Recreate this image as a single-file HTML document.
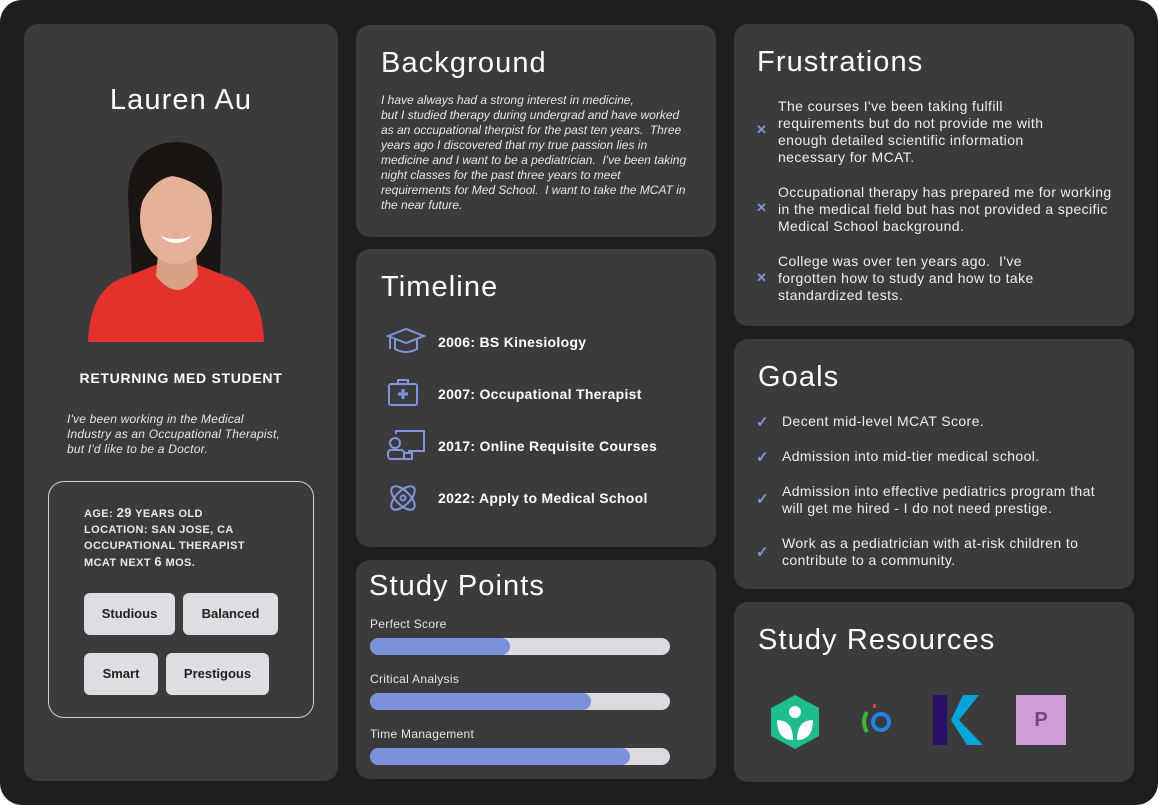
<!DOCTYPE html>
<html><head><style>
*{margin:0;padding:0;box-sizing:border-box}
body{width:1158px;height:805px;background:#fff;font-family:"Liberation Sans",sans-serif;color:#fff;overflow:hidden}
.frame{position:absolute;left:0;top:0;width:1158px;height:805px;background:#1e1e1f;border-radius:22px}
.card{position:absolute;background:#3b3b3d;border-radius:14px}
.h{position:absolute;font-size:29px;font-weight:normal;letter-spacing:1.1px}
.it{font-style:italic;font-size:12px;line-height:15px;color:#e6e6e6;letter-spacing:.2px}
.row{position:absolute;font-size:14px;font-weight:bold;left:82px;letter-spacing:.3px}
.ic{position:absolute;left:30px}
.lst{position:absolute;left:44px;font-size:14px;line-height:17px;color:#eee;width:300px;letter-spacing:.4px}
.mk{position:absolute;left:22px;color:#7f95dc;font-size:13px;font-weight:bold}
.bar{position:absolute;left:14px;width:300px;height:17px;border-radius:9px;background:#d9dbe0}
.bar i{display:block;height:17px;border-radius:9px;background:#7c91d9}
.lbl{position:absolute;left:14px;font-size:12px;color:#e6e6e6;letter-spacing:.3px}
.tag{position:absolute;background:#dcdee2;color:#222;border-radius:6px;font-size:13px;font-weight:bold;text-align:center;line-height:42px;height:42px}
</style></head><body>
<div class="frame"></div>

<div class="card" style="left:24px;top:24px;width:314px;height:757px">
 <div class="h" style="left:0;width:314px;text-align:center;top:60px">Lauren Au</div>
 <svg style="position:absolute;left:64px;top:112px" width="176" height="206" viewBox="0 0 176 206">
  <path d="M40 60 Q40 8 88 6 Q136 8 134 60 L132 140 L44 140Z" fill="#1a1412"/>
  <path d="M0 206 Q2 150 40 140 L70 128 L108 128 L138 140 Q174 150 176 206Z" fill="#e5312b"/>
  <path d="M70 118 L108 118 L110 140 Q90 168 68 140Z" fill="#d9a184"/>
  <ellipse cx="88" cy="82" rx="36" ry="46" fill="#e4b299"/>
  <path d="M52 70 Q56 24 90 24 Q122 26 126 66 Q110 44 84 40 Q64 44 52 70Z" fill="#1a1412"/>
  <path d="M72 100 Q88 114 104 100 Q88 106 72 100Z" fill="#fff"/>
 </svg>
 <div style="position:absolute;left:0;width:314px;text-align:center;top:346px;font-size:14px;font-weight:bold;letter-spacing:.7px">RETURNING MED STUDENT</div>
 <div class="it" style="position:absolute;left:43px;top:388px;width:215px">I've been working in the Medical Industry as an Occupational Therapist, but I'd like to be a Doctor.</div>
 <div style="position:absolute;left:24px;top:457px;width:266px;height:237px;border:1.5px solid #cfcfcf;border-radius:16px">
  <div style="position:absolute;left:35px;top:23px;font-size:11px;font-weight:bold;line-height:16px;color:#e8e8e8;letter-spacing:.4px">AGE: <span style="font-size:13px">29</span> YEARS OLD<br>LOCATION: SAN JOSE, CA<br>OCCUPATIONAL THERAPIST<br>MCAT NEXT <span style="font-size:13px">6</span> MOS.</div>
  <div class="tag" style="left:35px;top:111px;width:91px">Studious</div>
  <div class="tag" style="left:134px;top:111px;width:95px">Balanced</div>
  <div class="tag" style="left:35px;top:171px;width:74px">Smart</div>
  <div class="tag" style="left:117px;top:171px;width:103px">Prestigous</div>
 </div>
</div>

<div class="card" style="left:356px;top:25px;width:360px;height:212px">
 <div class="h" style="left:25px;top:22px">Background</div>
 <div class="it" style="position:absolute;left:25px;top:68px;width:312px;letter-spacing:0">I have always had a strong interest in medicine,<br>but I studied therapy during undergrad and have worked as an occupational therpist for the past ten years.&nbsp; Three years ago I discovered that my true passion lies in medicine and I want to be a pediatrician.&nbsp; I've been taking night classes for the past three years to meet requirements for Med School.&nbsp; I want to take the MCAT in the near future.</div>
</div>

<div class="card" style="left:356px;top:249px;width:360px;height:298px">
 <div class="h" style="left:25px;top:22px">Timeline</div>
 <svg class="ic" style="top:78px" width="40" height="28" viewBox="0 0 40 28" fill="none" stroke="#7f95dc" stroke-width="2"><path d="M2 9 L20 2 L38 9 L20 16Z"/><path d="M9 12 V22 Q20 28 31 22 V12"/><path d="M4 10 V22"/></svg>
 <svg class="ic" style="top:128px" width="34" height="30" viewBox="0 0 34 30" fill="none" stroke="#7f95dc" stroke-width="2"><rect x="3" y="7" width="28" height="21" rx="2"/><path d="M12 7 V3 H22 V7"/><path d="M17 12 V22 M12 17 H22" stroke-width="3"/></svg>
 <svg class="ic" style="top:180px" width="40" height="32" viewBox="0 0 40 32" fill="none" stroke="#7f95dc" stroke-width="2"><path d="M10 5 V2 H38 V22 H22"/><circle cx="9" cy="14" r="5"/><rect x="2" y="21" width="16" height="9" rx="3"/><rect x="18" y="24" width="8" height="6"/></svg>
 <svg class="ic" style="top:232px" width="34" height="34" viewBox="0 0 34 34" fill="none" stroke="#7f95dc" stroke-width="2"><ellipse cx="17" cy="17" rx="15" ry="7" transform="rotate(45 17 17)"/><ellipse cx="17" cy="17" rx="15" ry="7" transform="rotate(-45 17 17)"/><circle cx="17" cy="17" r="2.5"/></svg>
 <div class="row" style="top:85px">2006: BS Kinesiology</div>
 <div class="row" style="top:137px">2007: Occupational Therapist</div>
 <div class="row" style="top:189px">2017: Online Requisite Courses</div>
 <div class="row" style="top:241px">2022: Apply to Medical School</div>
</div>

<div class="card" style="left:356px;top:560px;width:360px;height:219px">
 <div class="h" style="left:13px;top:10px">Study Points</div>
 <div class="lbl" style="top:57px">Perfect Score</div><div class="bar" style="top:78px"><i style="width:140px"></i></div>
 <div class="lbl" style="top:112px">Critical Analysis</div><div class="bar" style="top:133px"><i style="width:221px"></i></div>
 <div class="lbl" style="top:167px">Time Management</div><div class="bar" style="top:188px"><i style="width:260px"></i></div>
</div>

<div class="card" style="left:734px;top:24px;width:400px;height:302px">
 <div class="h" style="left:23px;top:22px">Frustrations</div>
 <div class="mk" style="top:98px">✕</div><div class="lst" style="top:74px;width:300px">The courses I've been taking fulfill requirements but do not provide me with enough detailed scientific information necessary for MCAT.</div>
 <div class="mk" style="top:176px">✕</div><div class="lst" style="top:160px;width:340px">Occupational therapy has prepared me for working in the medical field but has not provided a specific Medical School background.</div>
 <div class="mk" style="top:246px">✕</div><div class="lst" style="top:229px;width:305px">College was over ten years ago.&nbsp; I've forgotten how to study and how to take standardized tests.</div>
</div>

<div class="card" style="left:734px;top:339px;width:400px;height:250px">
 <div class="h" style="left:24px;top:22px">Goals</div>
 <div class="mk" style="top:74px;font-size:15px">✓</div><div class="lst" style="left:48px;top:74px">Decent mid-level MCAT Score.</div>
 <div class="mk" style="top:109px;font-size:15px">✓</div><div class="lst" style="left:48px;top:109px">Admission into mid-tier medical school.</div>
 <div class="mk" style="top:151px;font-size:15px">✓</div><div class="lst" style="left:48px;top:144px;width:315px">Admission into effective pediatrics program that will get me hired - I do not need prestige.</div>
 <div class="mk" style="top:204px;font-size:15px">✓</div><div class="lst" style="left:48px;top:196px;width:325px">Work as a pediatrician with at-risk children to contribute to a community.</div>
</div>

<div class="card" style="left:734px;top:602px;width:400px;height:180px">
 <div class="h" style="left:24px;top:22px">Study Resources</div>
 <svg style="position:absolute;left:35px;top:92px" width="52" height="56" viewBox="0 0 52 56"><path d="M26 1 L50 14 L50 42 L26 55 L2 42 L2 14Z" fill="#1fbc8c"/><circle cx="26" cy="18" r="6" fill="#fff"/><path d="M8 26 Q24 26 24 46 Q8 46 8 26Z M44 26 Q28 26 28 46 Q44 46 44 26Z" fill="#fff"/></svg>
 <svg style="position:absolute;left:125px;top:100px" width="36" height="36" viewBox="0 0 36 36"><path d="M8 10 Q2 20 8 30" stroke="#3cb43c" stroke-width="4" fill="none"/><circle cx="22" cy="20" r="8" stroke="#1e84e6" stroke-width="4" fill="none"/><rect x="14" y="2" width="3" height="4" fill="#e03c3c"/></svg>
 <svg style="position:absolute;left:199px;top:93px" width="52" height="50" viewBox="0 0 52 50"><rect x="0" y="0" width="14" height="50" fill="#2a0f6b"/><path d="M30 0 H46 L26 25 L50 50 H34 L18 25Z" fill="#00a6d9"/></svg>
 <div style="position:absolute;left:282px;top:93px;width:50px;height:50px;background:#d19cd9;color:#7b3f91;font-weight:bold;font-size:20px;text-align:center;line-height:50px">P</div>
</div>
</body></html>
